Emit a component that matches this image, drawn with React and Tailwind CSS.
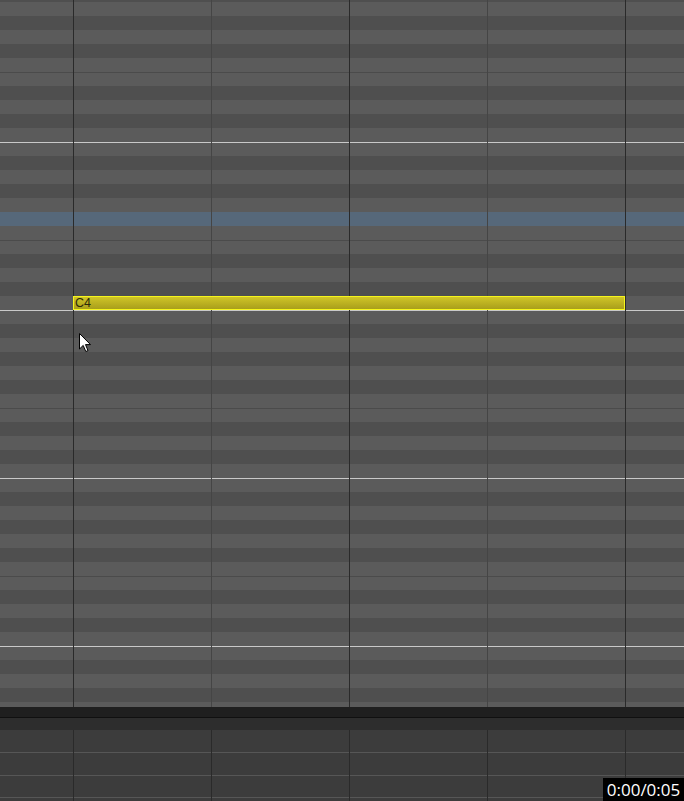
const BLACK = [1, 3, 6, 8, 10];

// top row is A#5 (cut to 2px), bottom row is G1 (cut to 5px)
const notes = [];
for (let n = 70; n >= 19; n--) notes.push(n);

function KeyRow({ n, first, last }) {
  const pc = n % 12;
  const black = BLACK.includes(pc);
  let bg = black ? 'bg-[#4f4f4f]' : 'bg-[#5b5b5b]';
  if (n === 54) bg = 'bg-[#56687a]';
  let border = '';
  if (pc === 11) border = 'border-t border-[#c9c9c9]';
  if (pc === 4) border = 'border-t border-[#4b4b4b]';
  const h = first ? 'h-[2px]' : last ? 'h-[5px]' : 'h-[14px]';
  return <div className={`${h} ${bg} ${border} shrink-0`} />;
}

const beats = [
  { x: 'left-[73px]', c: 'bg-[#2a2a2a]' },
  { x: 'left-[211px]', c: 'bg-[#454545]' },
  { x: 'left-[349px]', c: 'bg-[#2a2a2a]' },
  { x: 'left-[487px]', c: 'bg-[#454545]' },
  { x: 'left-[625px]', c: 'bg-[#2a2a2a]' },
];

export default function PianoRoll() {
  return (
    <div className="w-[684px] h-[801px] overflow-hidden bg-[#3c3c3c] flex flex-col relative" style={{ fontFamily: '"Liberation Sans", Arial, sans-serif' }}>
      {/* note grid */}
      <div className="relative h-[707px] flex flex-col shrink-0">
        {notes.map((n, i) => (
          <KeyRow key={n} n={n} first={i === 0} last={i === notes.length - 1} />
        ))}
        {beats.map((b) => (
          <div key={b.x} className={`absolute top-0 bottom-0 w-px ${b.x} ${b.c}`} />
        ))}
        {/* C4 note */}
        <div className="absolute left-[73px] top-[296px] w-[552px] h-[14px] border border-[#f5f51c] bg-gradient-to-b from-[#d0c527] to-[#a99e1b] flex items-center pl-[1px]">
          <span className="text-[12.5px] leading-none text-[#2c2a08]">C4</span>
        </div>
        {/* mouse cursor */}
        <svg className="absolute left-[79px] top-[333px]" width="13" height="20" viewBox="0 0 13 20">
          <path d="M0.5 0.5 L0.5 16 L4.2 12.4 L6.8 18.5 L9 17.6 L6.5 11.6 L11.5 11.6 Z" fill="#fff" stroke="#000" strokeWidth="1" strokeLinejoin="miter" />
        </svg>
      </div>

      {/* scrollbar / divider */}
      <div className="h-[10px] bg-[#1f1f1f] shrink-0" />
      <div className="h-px bg-[#101010] shrink-0" />
      <div className="h-[12px] bg-[#2d2d2d] shrink-0" />

      {/* velocity lane */}
      <div className="relative flex-1 flex flex-col">
        <div className="h-[23px] border-b border-[#565656] shrink-0" />
        <div className="h-[23px] border-b border-[#565656] shrink-0" />
        <div className="h-[22px] border-b border-[#565656] shrink-0" />
        {beats.map((b) => (
          <div key={b.x} className={`absolute top-0 bottom-0 w-px bg-[#2a2a2a] ${b.x}`} />
        ))}
        <div className="absolute right-0 bottom-0 w-[81px] h-[23px] bg-black flex items-center justify-center">
          <span className="text-[17px] leading-none text-white" style={{ fontFamily: '"Open Sans", "Noto Sans", sans-serif' }}>0:00/0:05</span>
        </div>
      </div>
    </div>
  );
}
